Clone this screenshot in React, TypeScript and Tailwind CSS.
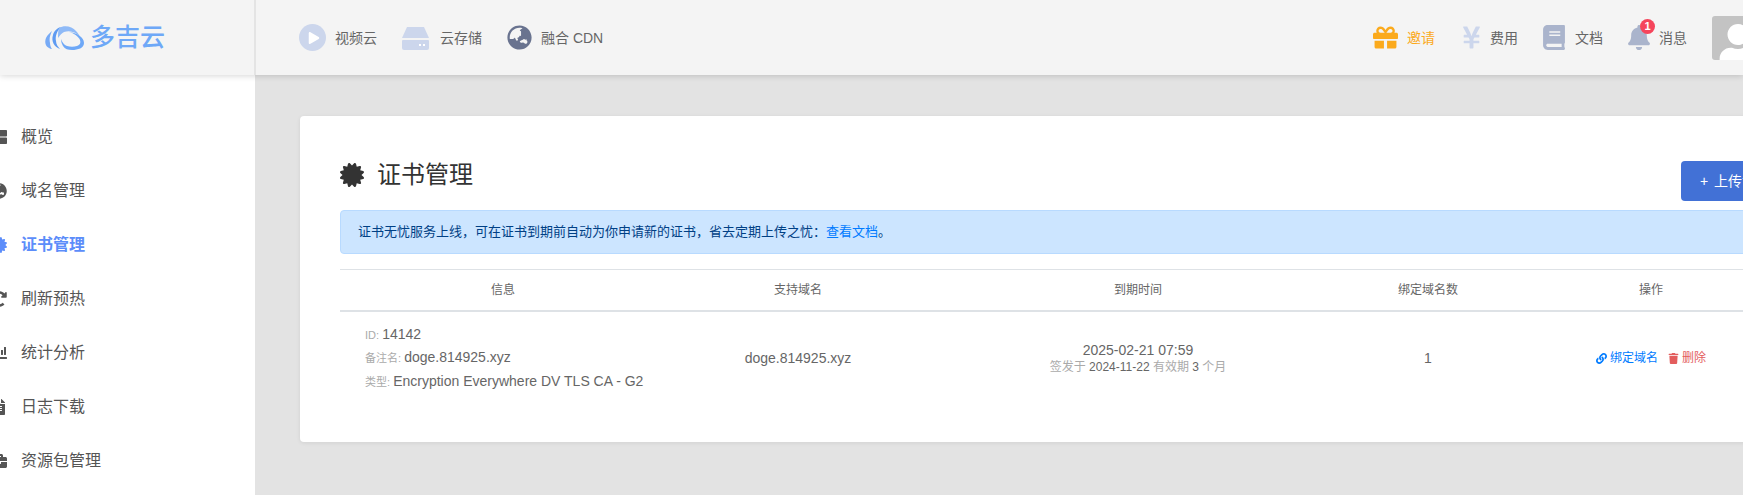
import { FaBell, FaBook, FaBriefcase, FaCertificate, FaChartBar, FaFileAlt, FaGift, FaGlobeAsia, FaLink, FaPlay, FaRedoAlt, FaThLarge, FaTrash, FaYenSign, FaUser } from "react-icons/fa";
import type { ReactNode } from "react";

function Logo() {
  return (
    <div className="flex items-center gap-[5px]">
      <svg width="40" height="24" viewBox="0 0 40 24" fill="none">
        <path d="M7 23C1 22-1 17 1 12 2 9 5 7 7 5 5 9 4 13 5 17c0 2 1 5 2 6Z" fill="#76aaf6" />
        <path d="M15 23C9 21 6 15 8 9c1-4 4-7 8-8-4 4-6 9-5 14 0 3 2 6 4 8Z" fill="#5f9bf2" />
        <path d="M14 2c5-3 13-2 17 3 2 2 3 4 4 6-4-5-10-7-16-5-2 1-4 3-6 6 0-4 0-7 1-10Z" fill="#8fbaf7" />
        <path d="M24 6c8 1 15 5 15 11 0 5-6 7-12 7-4 0-7-1-9-4-1-2-2-4-2-7 1 3 3 6 6 7 3 1 7 1 10 0 3-1 4-3 3-6-1-3-6-7-11-8Z" fill="#6ea8f7" />
      </svg>
      <span className="text-[25px] leading-none font-medium text-[#6ea8f7] mt-[-1px]">多吉云</span>
    </div>
  );
}

function HddIcon() {
  return (
    <svg width="29" height="24" viewBox="0 0 29 24">
      <path d="M6 1h17l5 11H1Z" fill="#ccd6ec" />
      <path d="M2 14h25a1 1 0 0 1 1 1v7a2 2 0 0 1-2 2H3a2 2 0 0 1-2-2v-7a1 1 0 0 1 1-1Z" fill="#ccd6ec" />
      <rect x="18" y="18" width="2" height="2" fill="#fff" />
      <rect x="22" y="18" width="2" height="2" fill="#fff" />
    </svg>
  );
}

function TopLink({ icon, label, className, labelClass = "text-[#666]" }: { icon: ReactNode; label: string; className: string; labelClass?: string }) {
  return (
    <div className={`flex items-center ${className}`}>
      {icon}
      <span className={`text-sm whitespace-nowrap ${labelClass}`}>{label}</span>
    </div>
  );
}

const navItems = [
  { label: "概览", Icon: FaThLarge },
  { label: "域名管理", Icon: FaGlobeAsia },
  { label: "证书管理", Icon: FaCertificate, active: true },
  { label: "刷新预热", Icon: FaRedoAlt },
  { label: "统计分析", Icon: FaChartBar },
  { label: "日志下载", Icon: FaFileAlt },
  { label: "资源包管理", Icon: FaBriefcase },
];

export default function App() {
  return (
    <div className="w-[1743px] h-[495px] overflow-hidden flex flex-col bg-[#e3e3e3] font-['Liberation_Sans','Noto_Sans_CJK_SC',sans-serif]">
      <header className="relative z-10 h-[75px] shrink-0 flex items-center bg-[#f4f4f4] shadow-[0_1px_6px_rgba(0,0,0,0.16)]">
        <div className="w-[256px] h-full shrink-0 flex items-center pl-[45px] border-r-2 border-[#e4e4e4]">
          <Logo />
        </div>
        <div className="flex items-center pl-[43px]">
          <TopLink className="gap-[9px] w-[102px]" label="视频云" icon={<span className="w-[27px] h-[27px] rounded-full bg-[#ccd6ec] flex items-center justify-center pl-[2px]"><FaPlay className="text-white" size={12} /></span>} />
          <TopLink className="gap-[10px] w-[106px]" label="云存储" icon={<HddIcon />} />
          <TopLink className="gap-[9px]" label="融合 CDN" icon={<FaGlobeAsia className="text-[#69738f]" size={25} />} />
        </div>
        <div className="ml-auto flex items-center h-full">
          <TopLink className="gap-[9px] w-[89px]" label="邀请" labelClass="text-[#fbaa1c]" icon={<FaGift className="text-[#fbaa1c]" size={25} />} />
          <TopLink className="gap-[9px] w-[81px]" label="费用" icon={<FaYenSign className="text-[#ccd6ec] shrink-0 w-[19px] h-[25px]" />} />
          <TopLink className="gap-[10px] w-[85px]" label="文档" icon={<FaBook className="text-[#aab4cc] shrink-0 w-[22px] h-[25px]" />} />
          <div className="relative flex items-center gap-[9px] w-[84px]">
            <FaBell className="text-[#aab4cc] shrink-0 w-[22px] h-[25px]" />
            <span className="absolute left-[12px] top-[-6px] w-[15px] h-[15px] rounded-full bg-[#f5455c] text-white text-[11px] font-bold leading-[15px] text-center">1</span>
            <span className="text-sm text-[#666]">消息</span>
          </div>
          <div className="w-[31px] h-[44px] rounded-l-[3px] bg-[#c3c3c3] overflow-hidden flex justify-start">
            <FaUser className="text-white shrink-0 mt-[8px] ml-[5px]" size={42} />
          </div>
        </div>
      </header>
      <div className="flex flex-1 min-h-0">
        <aside className="w-[255px] shrink-0 bg-white overflow-hidden pt-[35px]">
          {navItems.map(({ label, Icon, active }) => (
            <div key={label} className={`h-[54px] flex items-center gap-[14px] text-base ${active ? "text-[#5c8dfa] font-bold" : "text-[#555]"}`}>
              <Icon className={`shrink-0 -ml-[9px] ${active ? "text-[#5c8dfa]" : "text-[#555]"}`} size={16} />
              <span>{label}</span>
            </div>
          ))}
        </aside>
        <main className="flex-1 min-w-0 overflow-hidden pt-[41px] pl-[45px]">
          <div className="w-[1560px] h-[326px] bg-white rounded-[4px] shadow-[0_1px_4px_rgba(0,0,0,0.08)] pt-[45px] px-[40px]">
            <div className="w-[1452px]">
              <div className="h-[49px] flex items-start justify-between">
                <h1 className="flex items-center gap-[13px] text-2xl leading-[28px] text-[#333]">
                  <FaCertificate className="text-[#333]" size={24} />
                  证书管理
                </h1>
                <button className="h-[40px] w-[111px] rounded-[4px] bg-[#4271d6] text-white text-sm text-left pl-[19px] whitespace-nowrap"><span className="mr-[2px]">+</span> 上传证书</button>
              </div>
              <div className="h-[44px] flex items-center rounded-[4px] border border-[#b8daff] bg-[#cce5ff] px-[17px] text-[13px] text-[#004085]">
                证书无忧服务上线，可在证书到期前自动为你申请新的证书，省去定期上传之忧：<span className="text-[#007bff]">查看文档</span>。
              </div>
              <table className="mt-[15px] w-[1452px] table-fixed border-collapse text-center">
                <thead>
                  <tr className="h-[41px] border-t border-b-2 border-t-[#dee2e6] border-b-[#dee2e6] text-xs text-[#666]">
                    <th className="w-[326px] font-normal">信息</th>
                    <th className="w-[264px] font-normal">支持域名</th>
                    <th className="w-[416px] font-normal">到期时间</th>
                    <th className="w-[164px] font-normal">绑定域名数</th>
                    <th className="w-[282px] font-normal">操作</th>
                  </tr>
                </thead>
                <tbody>
                  <tr className="h-[94px] text-sm text-[#666]">
                    <td className="text-left pl-[25px] leading-[22.5px]">
                      <div><span className="text-[11px] text-[#aaa]">ID: </span>14142</div>
                      <div><span className="text-[11px] text-[#aaa]">备注名: </span>doge.814925.xyz</div>
                      <div><span className="text-[11px] text-[#aaa]">类型: </span>Encryption Everywhere DV TLS CA - G2</div>
                    </td>
                    <td>doge.814925.xyz</td>
                    <td className="leading-[18px]">
                      <div>2025-02-21 07:59</div>
                      <div className="text-xs text-[#aaa]">签发于 <span className="text-[#666]">2024-11-22</span> 有效期 <span className="text-[#666]">3</span> 个月</div>
                    </td>
                    <td>1</td>
                    <td className="text-xs">
                      <div className="flex items-center justify-center gap-[10px]">
                        <span className="flex items-center gap-[3px] text-[#007bff]"><FaLink size={11} />绑定域名</span>
                        <span className="flex items-center gap-[3px] text-[#e35d5d]"><FaTrash size={11} />删除</span>
                      </div>
                    </td>
                  </tr>
                </tbody>
              </table>
            </div>
          </div>
        </main>
      </div>
    </div>
  );
}
